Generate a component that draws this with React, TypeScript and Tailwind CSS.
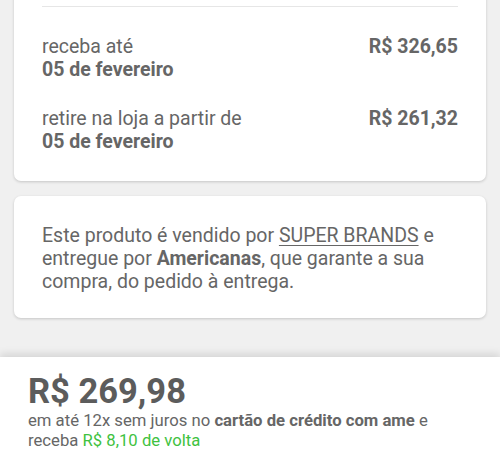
import React from "react";

export default function App() {
  return (
    <div
      className="w-[500px] h-[460px] overflow-hidden bg-[#f0f0f0] flex flex-col"
      style={{ fontFamily: "Roboto, 'Liberation Sans', sans-serif" }}
    >
      <div className="mx-[14px] -mt-[10px] bg-white rounded-[7px] shadow-[0_1px_3px_rgba(0,0,0,0.18)] px-[28px] pt-[16px] pb-[28px]">
        <div className="h-px bg-[#e6e6e6]" />
        <div className="mt-[28px] flex justify-between text-[19.5px] leading-[23px] text-[#666]">
          <div>
            <div>receba até</div>
            <div className="font-bold">05 de fevereiro</div>
          </div>
          <div className="font-bold">R$ 326,65</div>
        </div>
        <div className="mt-[26px] flex justify-between text-[19.5px] leading-[23px] text-[#666]">
          <div>
            <div>retire na loja a partir de</div>
            <div className="font-bold">05 de fevereiro</div>
          </div>
          <div className="font-bold">R$ 261,32</div>
        </div>
      </div>

      <div className="mx-[14px] mt-[15px] bg-white rounded-[7px] shadow-[0_1px_3px_rgba(0,0,0,0.18)] px-[28px] pt-[28px] pb-[25px] text-[19.5px] leading-[23px] text-[#666]">
        Este produto é vendido por <span className="underline underline-offset-[3px]">SUPER BRANDS</span> e entregue por{" "}
        <span className="font-bold">Americanas</span>, que garante a sua compra, do pedido à entrega.
      </div>

      <div className="mt-[39px] flex-1 bg-white shadow-[0_-3px_8px_rgba(0,0,0,0.12)] px-[28px] pt-[14px]">
        <div className="text-[34.5px] leading-[40px] font-bold text-[#5c5c5c]">R$ 269,98</div>
        <div className="text-[16.7px] leading-[20px] text-[#666]">
          em até 12x sem juros no <span className="font-bold">cartão de crédito com ame</span> e receba{" "}
          <span className="text-[#3fc23f]">R$ 8,10 de volta</span>
        </div>
      </div>
    </div>
  );
}
